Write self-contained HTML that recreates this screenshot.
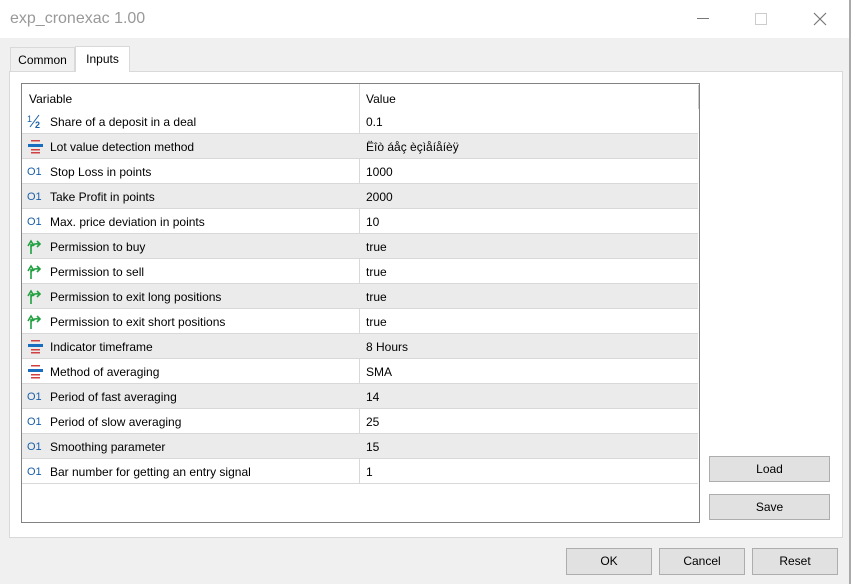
<!DOCTYPE html><html><head><style>
body{margin:0;width:851px;height:584px;overflow:hidden;font-family:"Liberation Sans",sans-serif;font-size:12px;color:#000;background:#f0f0f0;position:relative}
.abs{position:absolute}
.btn{position:absolute;background:#e1e1e1;border:1px solid #adadad;box-sizing:border-box;text-align:center;font-size:12px}
.row{position:absolute;left:0;width:676px;height:25px;border-bottom:1px solid #d8d8d8;box-sizing:border-box}
.row.g{background:#ebebeb}
.row span{position:absolute;top:6px}
.ic{position:absolute;left:5px;top:4px;width:16px;height:16px}
</style></head><body>
<div class="abs" style="left:0;top:0;width:850px;height:38px;background:#fff"></div>
<div class="abs" style="left:849px;top:0;width:2px;height:584px;background:#aaa"></div>
<div class="abs" style="left:10px;top:10px;font-size:16px;color:#999">exp_cronexac 1.00</div>
<div class="abs" style="left:697px;top:18px;width:12px;height:1px;background:#777"></div>
<div class="abs" style="left:755px;top:13px;width:10px;height:10px;border:1px solid #ccc"></div>
<svg class="abs" style="left:813px;top:12px" width="14" height="14"><path d="M1 1L13 13M13 1L1 13" stroke="#777" stroke-width="1.2"/></svg>
<div class="abs" style="left:9px;top:71px;width:834px;height:467px;background:#fff;border:1px solid #d9d9d9;box-sizing:border-box"></div>
<div class="abs" style="left:10px;top:47px;width:65px;height:24px;background:#f0f0f0;border:1px solid #d9d9d9;border-bottom:none;box-sizing:border-box;text-align:center;line-height:25px">Common</div>
<div class="abs" style="left:75px;top:46px;width:55px;height:26px;background:#fff;border:1px solid #d9d9d9;border-bottom:none;box-sizing:border-box;text-align:center;line-height:24px">Inputs</div>
<div class="abs" style="left:21px;top:83px;width:679px;height:440px;background:#fff;border:1px solid #828282;box-sizing:border-box">
<div class="abs" style="left:337px;top:0;width:1px;height:400px;background:#d8d8d8"></div>
<div class="abs" style="left:676px;top:1px;width:1px;height:24px;background:#ccc"></div>
<div class="abs" style="left:7px;top:8px">Variable</div><div class="abs" style="left:344px;top:8px">Value</div>
<div id="rows" class="abs" style="left:0;top:25px"></div>
</div>
<div class="btn" style="left:709px;top:456px;width:121px;height:26px;line-height:24px">Load</div>
<div class="btn" style="left:709px;top:494px;width:121px;height:26px;line-height:24px">Save</div>
<div class="btn" style="left:566px;top:548px;width:86px;height:27px;line-height:25px">OK</div>
<div class="btn" style="left:659px;top:548px;width:86px;height:27px;line-height:25px">Cancel</div>
<div class="btn" style="left:752px;top:548px;width:86px;height:27px;line-height:25px">Reset</div>
<script>
var I={h:'<svg class="ic"><text x="0" y="9" font-size="9" fill="#1a5fa8" font-family="Liberation Sans">1</text><path d="M3 14L12 2" stroke="#1a5fa8"/><text x="8" y="15" font-size="9" fill="#1a5fa8" font-family="Liberation Sans" font-weight="bold">2</text></svg>',
e:'<svg class="ic"><rect x="4" y="2" width="9" height="1.5" fill="#d04040"/><rect x="1" y="6" width="15" height="3" fill="#1a6ec0"/><rect x="4" y="11" width="9" height="1.5" fill="#d04040"/><rect x="4" y="14" width="9" height="1.5" fill="#d04040"/></svg>',
n:'<svg class="ic"><text x="0" y="12" font-size="11" fill="#1a5fa8" font-family="Liberation Sans">O1</text></svg>',
b:'<svg class="ic"><path d="M4 16V6M1 8L4 3L7 8M4 9Q6 5 12 6M10 3L13 6L10 9" stroke="#20a040" stroke-width="1.6" fill="none"/></svg>'};
var R=[['h','Share of a deposit in a deal','0.1'],['e','Lot value detection method','Ëîò áåç èçìåíåíèÿ'],['n','Stop Loss in points','1000'],['n','Take Profit in points','2000'],['n','Max. price deviation in points','10'],['b','Permission to buy','true'],['b','Permission to sell','true'],['b','Permission to exit long positions','true'],['b','Permission to exit short positions','true'],['e','Indicator timeframe','8 Hours'],['e','Method of averaging','SMA'],['n','Period of fast averaging','14'],['n','Period of slow averaging','25'],['n','Smoothing parameter','15'],['n','Bar number for getting an entry signal','1']];
var h='';R.forEach(function(r,i){h+='<div class="row'+(i%2?' g':'')+'" style="top:'+(i*25)+'px">'+I[r[0]]+'<span style="left:28px">'+r[1]+'</span><span style="left:344px">'+r[2]+'</span></div>';});
document.getElementById('rows').innerHTML=h;
</script>
</body></html>
